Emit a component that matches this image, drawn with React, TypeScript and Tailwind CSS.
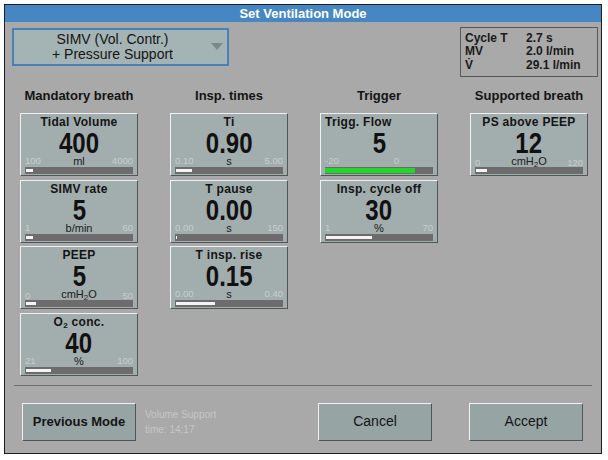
import type { ReactNode } from 'react';

/** One setting tile on the ventilator panel */
interface Field {
	label: ReactNode;
	value: string;
	unit?: ReactNode;
	min: string;
	max: string;
	/** bar fill in percent */
	fill: number;
	green?: boolean;
	alignLeft?: boolean;
	maxInset?: boolean;
}

const Sub2 = () => <span className="text-[8px] align-[-2px]">2</span>;

const columns: { title: string; fields: Field[] }[] = [
	{
		title: 'Mandatory breath',
		fields: [
			{ label: 'Tidal Volume', value: '400', unit: 'ml', min: '100', max: '4000', fill: 7 },
			{ label: 'SIMV rate', value: '5', unit: 'b/min', min: '1', max: '60', fill: 7 },
			{ label: 'PEEP', value: '5', unit: <>cmH<Sub2 />O</>, min: '0', max: '50', fill: 9 },
			{ label: <>O<Sub2 /> conc.</>, value: '40', unit: '%', min: '21', max: '100', fill: 24 },
		],
	},
	{
		title: 'Insp. times',
		fields: [
			{ label: 'Ti', value: '0.90', unit: 's', min: '0.10', max: '5.00', fill: 15 },
			{ label: 'T pause', value: '0.00', unit: 's', min: '0.00', max: '150', fill: 1 },
			{ label: 'T insp. rise', value: '0.15', unit: 's', min: '0.00', max: '0.40', fill: 37 },
		],
	},
	{
		title: 'Trigger',
		fields: [
			{ label: 'Trigg. Flow', value: '5', min: '-20', max: '0', fill: 83, green: true, alignLeft: true, maxInset: true },
			{ label: 'Insp. cycle off', value: '30', unit: '%', min: '1', max: '70', fill: 43 },
		],
	},
	{
		title: 'Supported breath',
		fields: [
			{ label: 'PS above PEEP', value: '12', unit: <>cmH<Sub2 />O</>, min: '0', max: '120', fill: 10 },
		],
	},
];

function FieldCard({ f }: { f: Field }) {
	return (
		<div className="h-[63px] flex flex-col bg-[#a2adad] border border-t-[#eef2f2] border-l-[#eef2f2] border-b-[#4e5656] border-r-[#4e5656] px-[4px]">
			<div
				className={`h-[16px] pt-[1px] text-[12px] leading-[14px] font-bold tracking-[0.3px] text-[#141414] whitespace-nowrap ${
					f.alignLeft ? 'text-left' : 'text-center'
				}`}
			>
				{f.label}
			</div>
			<div className="h-[26px] leading-[26px] text-center text-[30px] font-bold text-[#111]">
				<span className="inline-block scale-x-[0.8]">{f.value}</span>
			</div>
			<div className="h-[10px] grid grid-cols-[1fr_auto_1fr] items-center text-[9.5px] leading-[10px]">
				<span className="text-[#c8cece]">{f.min}</span>
				<span className="text-[#1a1a1a] text-[11px] whitespace-nowrap">{f.unit}</span>
				<span className={`text-right text-[#c8cece] ${f.maxInset ? 'mr-[34px]' : ''}`}>{f.max}</span>
			</div>
			<div className={`mt-[1px] h-[7px] bg-[#6c6c6c] ${f.green ? 'py-[1px]' : 'py-[2px] px-[1px]'}`}>
				<div
					className={`h-full ${f.green ? 'bg-[#22d62a]' : 'bg-[#f4f4f4]'}`}
					style={{ width: `${f.fill}%` }}
				/>
			</div>
		</div>
	);
}

function PanelButton({ children, bold }: { children: ReactNode; bold?: boolean }) {
	return (
		<button
			className={`w-[114px] h-[38px] bg-[#97a4a4] border border-t-[#f2f2f2] border-l-[#f2f2f2] border-b-[#4e5656] border-r-[#4e5656] text-[#141414] ${
				bold ? 'text-[13px] font-bold' : 'text-[14px]'
			}`}
		>
			{children}
		</button>
	);
}

export default function App() {
	return (
		<div className="w-[608px] h-[460px] bg-white pt-[4px] pl-[4px] font-['Liberation_Sans',Arial,sans-serif]">
			<div className="w-[598px] h-[450px] border border-[#1c1c28] bg-[#a9a9a9] flex flex-col">
				{/* Title bar */}
				<div className="h-[17px] bg-[#4687c3] text-white text-[13px] font-bold leading-[17px] text-center">
					Set Ventilation Mode
				</div>

				{/* Mode selector + readouts */}
				<div className="flex items-start justify-between pt-[5px] pl-[7px] pr-[3px]">
					<div className="mt-[1px] w-[217px] h-[38px] border-2 border-[#4a80ba] bg-[#a4b3b3] flex items-center">
						<div className="flex-1 text-center text-[14px] leading-[15px] text-[#141414]">
							<div>SIMV (Vol. Contr.)</div>
							<div>+ Pressure Support</div>
						</div>
						<svg className="w-[12px] h-[8px] mr-[4px]" viewBox="0 0 12 8">
							<polygon points="0,0 12,0 6,7" fill="#7a8a8a" />
						</svg>
					</div>
					<div className="w-[138px] h-[50px] border border-[#585858] flex flex-col justify-center pl-[4px] text-[12px] font-bold leading-[13.5px] text-[#1a1a1a]">
						<div className="flex"><span className="w-[61px]">Cycle T</span><span>2.7 s</span></div>
						<div className="flex"><span className="w-[61px]">MV</span><span>2.0 l/min</span></div>
						<div className="flex"><span className="w-[61px]">V̇</span><span>29.1 l/min</span></div>
					</div>
				</div>

				{/* Setting columns */}
				<div className="grid grid-cols-[118px_118px_118px_118px] gap-x-[32px] pl-[15px] mt-[11px]">
					{columns.map((col) => (
						<div key={col.title} className="flex flex-col">
							<div className="h-[15px] text-[13px] leading-[15px] font-bold text-center text-[#141414] whitespace-nowrap">
								{col.title}
							</div>
							<div className="mt-[10px] flex flex-col gap-[3.5px]">
								{col.fields.map((f, i) => (
									<FieldCard key={i} f={f} />
								))}
							</div>
						</div>
					))}
				</div>

				{/* Separator */}
				<div className="mx-[9px] mt-[9px] h-px bg-[#6e6e6e]" />

				{/* Bottom actions */}
				<div className="flex items-center justify-between pl-[17px] pr-[18px] mt-[17px]">
					<div className="flex items-center">
						<PanelButton bold>Previous Mode</PanelButton>
						<div className="ml-[9px] text-[10px] leading-[15px] text-[#c6c6c6]">
							<div>Volume Support</div>
							<div>time: 14:17</div>
						</div>
					</div>
					<div className="flex gap-[37px]">
						<PanelButton>Cancel</PanelButton>
						<PanelButton>Accept</PanelButton>
					</div>
				</div>
			</div>
		</div>
	);
}
